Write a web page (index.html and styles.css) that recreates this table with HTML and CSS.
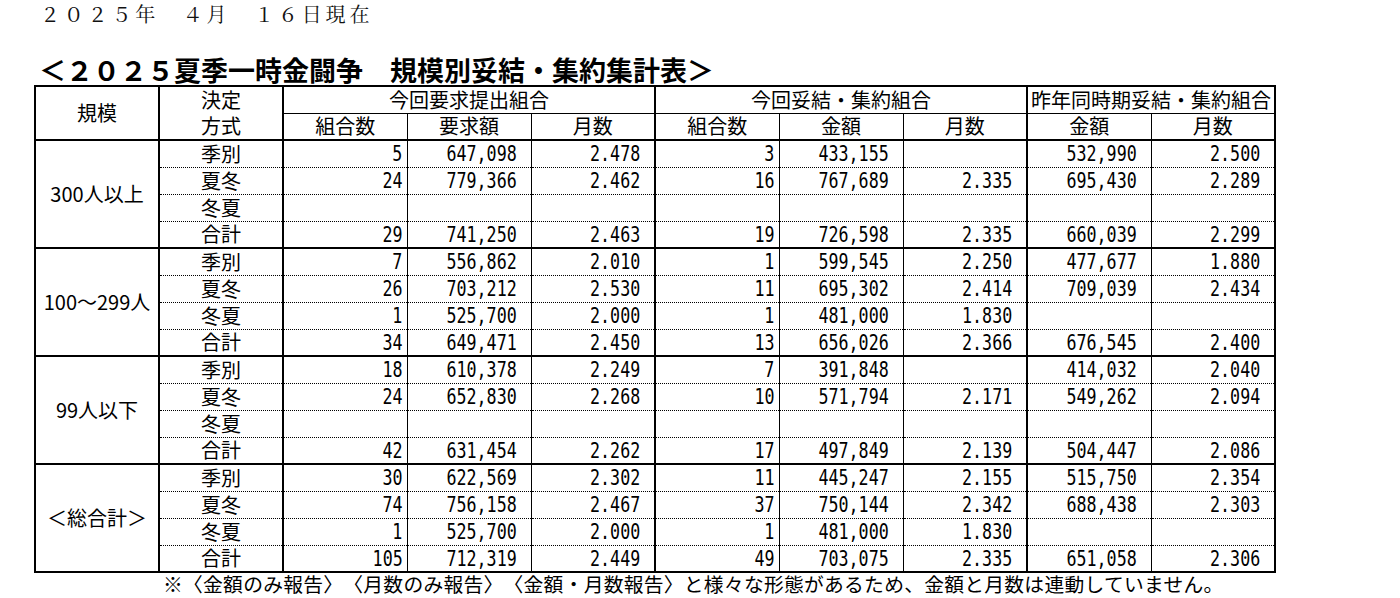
FILE: index.html
```html
<!DOCTYPE html>
<html lang="ja">
<head>
<meta charset="utf-8">
<title>2025夏季一時金闘争 規模別妥結・集約集計表</title>
<link rel="stylesheet" href="styles.css">
</head>
<body>
<div class="page">
  <div class="date">２０２５年　４月　１６日現在</div>
  <h1 class="title">＜２０２５夏季一時金闘争　規模別妥結・集約集計表＞</h1>
  <table class="tbl">
    <colgroup>
      <col>
      <col class="tk">
      <col class="tk">
      <col>
      <col>
      <col class="tk">
      <col>
      <col>
      <col class="tk">
      <col>
    </colgroup>
    <thead>
      <tr>
        <th rowspan="2" class="scale-h">規模</th>
        <th class="kt1">決定</th>
        <th colspan="3" class="grp">今回要求提出組合</th>
        <th colspan="3" class="grp">今回妥結・集約組合</th>
        <th colspan="2" class="grp">昨年同時期妥結・集約組合</th>
      </tr>
      <tr class="h2">
        <th class="kt2">方式</th>
        <th>組合数</th><th>要求額</th><th>月数</th>
        <th>組合数</th><th>金額</th><th>月数</th>
        <th>金額</th><th>月数</th>
      </tr>
    </thead>
    <tbody>
      <tr><td rowspan="4" class="scale">300人以上</td><td class="k">季別</td><td><span class="n c">5</span></td><td><span class="n">647,098</span></td><td><span class="n">2.478</span></td><td><span class="n c">3</span></td><td><span class="n">433,155</span></td><td></td><td><span class="n">532,990</span></td><td><span class="n">2.500</span></td></tr>
      <tr><td class="k">夏冬</td><td><span class="n c">24</span></td><td><span class="n">779,366</span></td><td><span class="n">2.462</span></td><td><span class="n c">16</span></td><td><span class="n">767,689</span></td><td><span class="n">2.335</span></td><td><span class="n">695,430</span></td><td><span class="n">2.289</span></td></tr>
      <tr><td class="k">冬夏</td><td></td><td></td><td></td><td></td><td></td><td></td><td></td><td></td></tr>
      <tr><td class="k">合計</td><td><span class="n c">29</span></td><td><span class="n">741,250</span></td><td><span class="n">2.463</span></td><td><span class="n c">19</span></td><td><span class="n">726,598</span></td><td><span class="n">2.335</span></td><td><span class="n">660,039</span></td><td><span class="n">2.299</span></td></tr>
    </tbody>
    <tbody>
      <tr><td rowspan="4" class="scale">100～299人</td><td class="k">季別</td><td><span class="n c">7</span></td><td><span class="n">556,862</span></td><td><span class="n">2.010</span></td><td><span class="n c">1</span></td><td><span class="n">599,545</span></td><td><span class="n">2.250</span></td><td><span class="n">477,677</span></td><td><span class="n">1.880</span></td></tr>
      <tr><td class="k">夏冬</td><td><span class="n c">26</span></td><td><span class="n">703,212</span></td><td><span class="n">2.530</span></td><td><span class="n c">11</span></td><td><span class="n">695,302</span></td><td><span class="n">2.414</span></td><td><span class="n">709,039</span></td><td><span class="n">2.434</span></td></tr>
      <tr><td class="k">冬夏</td><td><span class="n c">1</span></td><td><span class="n">525,700</span></td><td><span class="n">2.000</span></td><td><span class="n c">1</span></td><td><span class="n">481,000</span></td><td><span class="n">1.830</span></td><td></td><td></td></tr>
      <tr><td class="k">合計</td><td><span class="n c">34</span></td><td><span class="n">649,471</span></td><td><span class="n">2.450</span></td><td><span class="n c">13</span></td><td><span class="n">656,026</span></td><td><span class="n">2.366</span></td><td><span class="n">676,545</span></td><td><span class="n">2.400</span></td></tr>
    </tbody>
    <tbody>
      <tr><td rowspan="4" class="scale">99人以下</td><td class="k">季別</td><td><span class="n c">18</span></td><td><span class="n">610,378</span></td><td><span class="n">2.249</span></td><td><span class="n c">7</span></td><td><span class="n">391,848</span></td><td></td><td><span class="n">414,032</span></td><td><span class="n">2.040</span></td></tr>
      <tr><td class="k">夏冬</td><td><span class="n c">24</span></td><td><span class="n">652,830</span></td><td><span class="n">2.268</span></td><td><span class="n c">10</span></td><td><span class="n">571,794</span></td><td><span class="n">2.171</span></td><td><span class="n">549,262</span></td><td><span class="n">2.094</span></td></tr>
      <tr><td class="k">冬夏</td><td></td><td></td><td></td><td></td><td></td><td></td><td></td><td></td></tr>
      <tr><td class="k">合計</td><td><span class="n c">42</span></td><td><span class="n">631,454</span></td><td><span class="n">2.262</span></td><td><span class="n c">17</span></td><td><span class="n">497,849</span></td><td><span class="n">2.139</span></td><td><span class="n">504,447</span></td><td><span class="n">2.086</span></td></tr>
    </tbody>
    <tbody>
      <tr><td rowspan="4" class="scale">＜総合計＞</td><td class="k">季別</td><td><span class="n c">30</span></td><td><span class="n">622,569</span></td><td><span class="n">2.302</span></td><td><span class="n c">11</span></td><td><span class="n">445,247</span></td><td><span class="n">2.155</span></td><td><span class="n">515,750</span></td><td><span class="n">2.354</span></td></tr>
      <tr><td class="k">夏冬</td><td><span class="n c">74</span></td><td><span class="n">756,158</span></td><td><span class="n">2.467</span></td><td><span class="n c">37</span></td><td><span class="n">750,144</span></td><td><span class="n">2.342</span></td><td><span class="n">688,438</span></td><td><span class="n">2.303</span></td></tr>
      <tr><td class="k">冬夏</td><td><span class="n c">1</span></td><td><span class="n">525,700</span></td><td><span class="n">2.000</span></td><td><span class="n c">1</span></td><td><span class="n">481,000</span></td><td><span class="n">1.830</span></td><td></td><td></td></tr>
      <tr><td class="k">合計</td><td><span class="n c">105</span></td><td><span class="n">712,319</span></td><td><span class="n">2.449</span></td><td><span class="n c">49</span></td><td><span class="n">703,075</span></td><td><span class="n">2.335</span></td><td><span class="n">651,058</span></td><td><span class="n">2.306</span></td></tr>
    </tbody>
  </table>
  <p class="note">※〈金額のみ報告〉〈月数のみ報告〉〈金額・月数報告〉と様々な形態があるため、金額と月数は連動していません。</p>
</div>
</body>
</html>
```

FILE: styles.css
```css
html, body {
  margin: 0;
  padding: 0;
  background: #fff;
  color: #000;
}

.page {
  padding-left: 34px;
  font-family: "Noto Sans CJK JP", sans-serif;
  text-spacing-trim: space-all;
}

.date {
  margin: 0 0 0 6px;
  height: 28px;
  line-height: 28px;
  font-family: "Noto Serif CJK JP", "Noto Sans CJK JP", serif;
  font-size: 20px;
  letter-spacing: 3.8px;
  color: #111;
}

.title {
  margin: 27px 0 0 5px;
  height: 30px;
  line-height: 30px;
  font-size: 27px;
  font-weight: 700;
  letter-spacing: 0;
}

.tbl {
  border-collapse: collapse;
  table-layout: fixed;
  width: 1240px;
  border: 2px solid #000;
  font-size: 20px;
  line-height: 20px;
}

.tbl col {
  width: 124px;
}

.tbl col.tk {
  border-left: 2px solid #000;
}

.tbl tr {
  height: 27px;
}

.tbl th,
.tbl td {
  padding: 0 4px 0 0;
  font-weight: 400;
  border-left: 1px solid #000;
  border-right: 1px solid #000;
  border-top: 1px dotted #000;
  border-bottom: 1px dotted #000;
  text-align: right;
  vertical-align: middle;
  white-space: nowrap;
}

.tbl th {
  text-align: center;
  padding: 0;
  border-top: 1px solid #000;
  border-bottom: 1px solid #000;
}

.tbl th.kt1 {
  border-bottom: none;
}

.tbl th.kt2 {
  border-top: none;
}

.tbl .h2 th {
  border-bottom: 2px solid #000;
}

.tbl th.scale-h {
  border-bottom: 2px solid #000;
}

.tbl tbody tr:first-child td {
  border-top: 2px solid #000;
}

.tbl tbody tr:last-child td,
.tbl td.scale {
  border-bottom: 2px solid #000;
}

.tbl td.scale {
  text-align: center;
  padding: 0;
}

.tbl td.k {
  text-align: center;
  padding: 0;
}

/* narrow, tall half-width digits (gothic monospace look) */
.n {
  display: inline-block;
  margin-right: 10px;
  font-family: "DejaVu Sans Mono", monospace;
  font-size: 22px;
  line-height: 20px;
  transform: scaleX(0.758);
  transform-origin: right center;
}

.n.c {
  margin-right: 0;
}

.note {
  margin: 0 0 0 129px;
  font-size: 19.8px;
  line-height: 22px;
  letter-spacing: 0.25px;
}
```
